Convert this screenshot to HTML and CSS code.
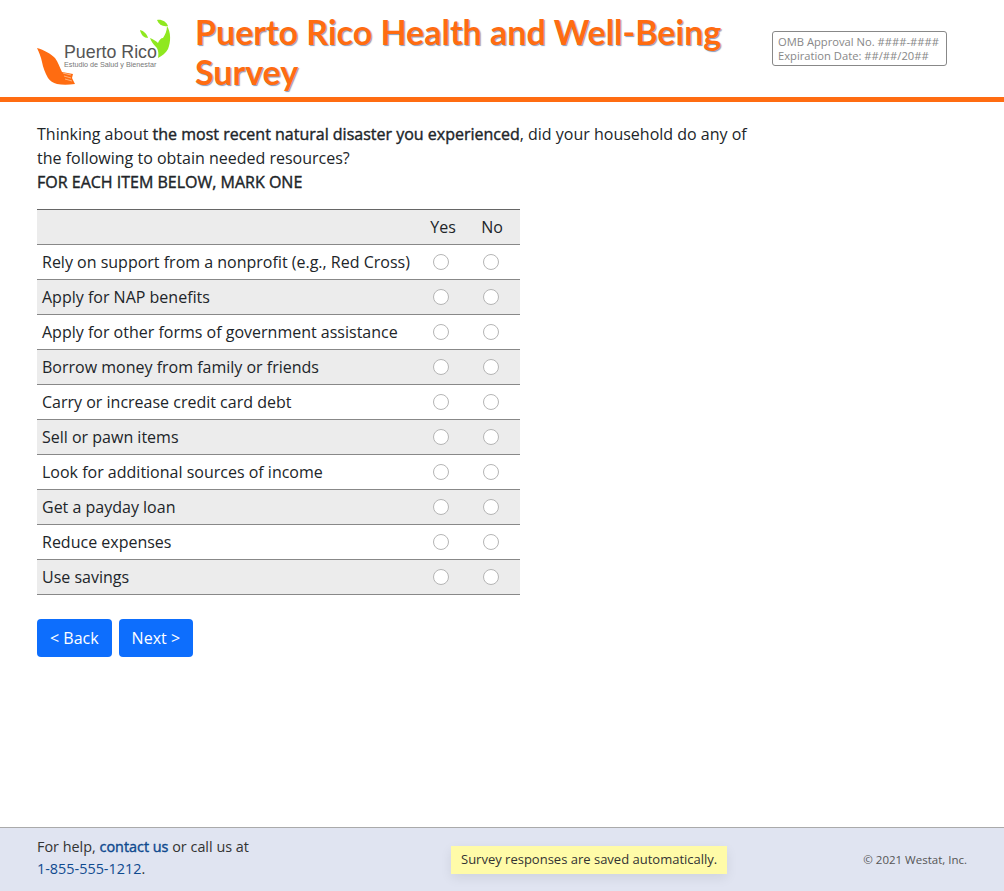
FILE: index.html
```html
<!DOCTYPE html>
<html>

<head>
  <title>Puerto Rico Health and Well-Being Survey</title>
  <link rel="stylesheet" href="styles.css">
</head>

<body>
  <header class="Survey-Header">
    <div class="Logo">
      <svg class="Logo-Art" width="136" height="70" viewBox="0 0 136 70">
        <path fill="#ff6c11" d="M1 31 C8 33 15 37 19 41 C22 45 24 51 26 55 L37 57 L36 61 L39 67 C32 68 26 68 21 67 C17 66 14 64 12 61 C9 56 7 50 6 45 C5 40 3 35 1 31 Z" />
        <path fill="none" stroke="#ffb27a" stroke-width="1" d="M27 56 L35 58 M28 59 L35 61 M29 62 L36 64" />
        <path fill="#8fe81f" d="M104 13 C108 14 111 17 112 21 C108 21 105 18 104 13 Z" />
        <path fill="#8fe81f" d="M121 3 C125 2 130 4 132 9 C127 10 123 8 121 3 Z" />
        <path fill="#8fe81f" d="M131 9 C135 15 135 25 132 32 C130 36 126 39 122 41 C123 36 122 32 120 30 C117 27 115 24 114 21 C117 22 120 24 122 26 C123 23 125 21 127 21 C129 18 131 14 131 9 Z" />
      </svg>
      <div class="Logo-Name">Puerto Rico</div>
      <div class="Logo-Tag">Estudio de Salud y Bienestar</div>
    </div>
    <h1 class="Survey-Title">Puerto Rico Health and Well-Being Survey</h1>
    <div class="Omb-Box">
      OMB Approval No. ####-####<br>
      Expiration Date: ##/##/20##
    </div>
  </header>

  <main class="Survey-Main">
    <p class="Question">
      Thinking about <b>the most recent natural disaster you experienced</b>, did your household do any of the following to obtain needed resources?<br>
      <b>FOR EACH ITEM BELOW, MARK ONE</b>
    </p>

    <table class="Grid">
      <tr class="Grid-Head">
        <th></th>
        <th>Yes</th>
        <th>No</th>
      </tr>
      <tr>
        <td>Rely on support from a nonprofit (e.g., Red Cross)</td>
        <td><input type="radio" name="q1"></td>
        <td><input type="radio" name="q1"></td>
      </tr>
      <tr>
        <td>Apply for NAP benefits</td>
        <td><input type="radio" name="q2"></td>
        <td><input type="radio" name="q2"></td>
      </tr>
      <tr>
        <td>Apply for other forms of government assistance</td>
        <td><input type="radio" name="q3"></td>
        <td><input type="radio" name="q3"></td>
      </tr>
      <tr>
        <td>Borrow money from family or friends</td>
        <td><input type="radio" name="q4"></td>
        <td><input type="radio" name="q4"></td>
      </tr>
      <tr>
        <td>Carry or increase credit card debt</td>
        <td><input type="radio" name="q5"></td>
        <td><input type="radio" name="q5"></td>
      </tr>
      <tr>
        <td>Sell or pawn items</td>
        <td><input type="radio" name="q6"></td>
        <td><input type="radio" name="q6"></td>
      </tr>
      <tr>
        <td>Look for additional sources of income</td>
        <td><input type="radio" name="q7"></td>
        <td><input type="radio" name="q7"></td>
      </tr>
      <tr>
        <td>Get a payday loan</td>
        <td><input type="radio" name="q8"></td>
        <td><input type="radio" name="q8"></td>
      </tr>
      <tr>
        <td>Reduce expenses</td>
        <td><input type="radio" name="q9"></td>
        <td><input type="radio" name="q9"></td>
      </tr>
      <tr>
        <td>Use savings</td>
        <td><input type="radio" name="q10"></td>
        <td><input type="radio" name="q10"></td>
      </tr>
    </table>

    <div class="Nav-Buttons">
      <button class="Btn">&lt; Back</button>
      <button class="Btn">Next &gt;</button>
    </div>
  </main>

  <footer class="Survey-Footer">
    <div class="Help-Text">
      For help, <a class="Contact-Link" href="#">contact us</a> or call us at<br>
      <span class="Phone">1-855-555-1212</span>.
    </div>
    <div class="Saved-Note">Survey responses are saved automatically.</div>
    <div class="Copyright">© 2021 Westat, Inc.</div>
  </footer>
</body>

</html>
```

FILE: styles.css
```css
body, html {
  margin: 0;
  padding: 0;
}

body {
  height: 891px;
  display: flex;
  flex-direction: column;
  background: #fff;
  color: #212529;
  font-family: "Open Sans", sans-serif;
  font-size: 16px;
}

.Survey-Header {
  height: 97px;
  display: flex;
  align-items: flex-start;
  border-bottom: 5px solid #ff6c11;
}

/* Logo is a drawing with the words laid over it */
.Logo {
  position: relative;
  flex: none;
  width: 136px;
  height: 70px;
  margin: 17px 0 0 36px;
}

.Logo-Art {
  display: block;
}

.Logo-Name {
  position: absolute;
  left: 28px;
  top: 25px;
  font-family: "Liberation Sans", sans-serif;
  font-size: 17.8px;
  color: #555;
  white-space: nowrap;
}

.Logo-Tag {
  position: absolute;
  left: 28px;
  top: 43px;
  font-family: "Liberation Sans", sans-serif;
  font-size: 7.2px;
  color: #777;
  white-space: nowrap;
}

.Survey-Title {
  flex: none;
  width: 560px;
  margin: 12px 0 0 23px;
  font-family: "Lato", sans-serif;
  font-size: 34px;
  font-weight: 700;
  line-height: 40px;
  color: #ff6c11;
  text-shadow: 1px 1px 1px rgba(60, 90, 140, 0.6);
}

.Omb-Box {
  flex: none;
  width: 162px;
  margin: 31px 0 0 17px;
  padding: 3px 6px 2px 5px;
  border: 1px solid #888;
  border-radius: 3px;
  font-size: 11.2px;
  line-height: 14px;
  color: #888;
  white-space: nowrap;
}

.Survey-Main {
  flex: 1;
  padding: 20px 0 0 37px;
}

.Question {
  width: 720px;
  margin: 0 0 15px;
  line-height: 24px;
}

/* Thickened regular, real bold runs wider than the line allows */
.Question b {
  font-weight: 400;
  -webkit-text-stroke: 0.4px currentColor;
}

.Grid {
  width: 483px;
  border-collapse: collapse;
  border-top: 1px solid #666;
}

.Grid tr {
  height: 35px;
  border-bottom: 1px solid #888;
}

.Grid tr:nth-child(odd) {
  background: #ececec;
}

.Grid th {
  padding: 0;
  font-weight: 400;
}

.Grid td {
  padding: 0 0 0 5px;
  white-space: nowrap;
}

.Grid th:nth-child(2),
.Grid td:nth-child(2) {
  width: 50px;
  padding: 0;
  text-align: center;
}

.Grid th:nth-child(3),
.Grid td:nth-child(3) {
  width: 50px;
  padding: 0 4px 0 0;
  text-align: center;
}

.Grid th:nth-child(2) {text-indent: 4px;}
.Grid th:nth-child(3) {text-indent: 2px;}

.Grid input {
  appearance: none;
  display: block;
  width: 16px;
  height: 16px;
  margin: 0 auto;
  background: #fff;
  border: 1px solid #b5b5b5;
  border-radius: 50%;
}

.Nav-Buttons {
  display: flex;
  gap: 7px;
  margin-top: 24px;
}

.Btn {
  height: 38px;
  padding: 0 13px;
  border: none;
  border-radius: 4px;
  background: #0d6efd;
  color: #fff;
  font-family: "Open Sans", sans-serif;
  font-size: 16px;
}

.Survey-Footer {
  height: 63px;
  display: flex;
  align-items: center;
  padding: 0 37px;
  background: #e0e4f1;
  border-top: 1px solid #aaa;
}

.Help-Text {
  flex: none;
  width: 414px;
  margin-bottom: 3px;
  font-size: 14.4px;
  line-height: 22px;
  color: #333;
}

.Contact-Link {
  color: #0f4a8f;
  -webkit-text-stroke: 0.4px currentColor;
  text-decoration: none;
}

.Phone {
  color: #0f4a8f;
}

.Saved-Note {
  margin-top: 1px;
  padding: 5px 10px 6px;
  background: #fffba8;
  font-size: 13px;
  line-height: 17px;
  color: #333;
  white-space: nowrap;
  box-shadow: 0 4px 12px rgba(0, 0, 0, 0.08);
}

.Copyright {
  margin-left: auto;
  font-size: 11.5px;
  color: #555;
}
```
